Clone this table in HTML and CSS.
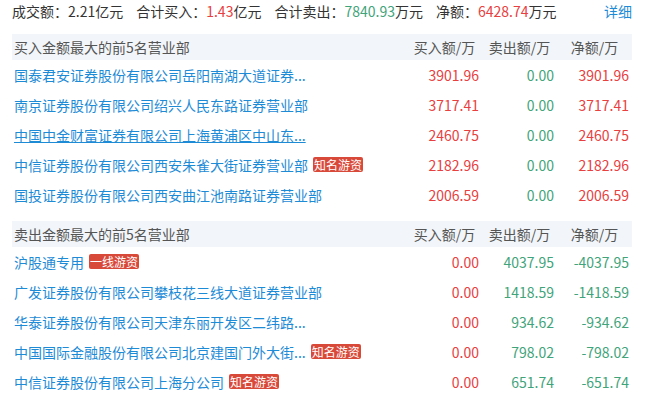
FILE: index.html
```html
<!DOCTYPE html>
<html lang="zh-CN">
<head>
<meta charset="utf-8">
<title>龙虎榜</title>
<link rel="stylesheet" href="styles.css">
</head>
<body>
<div class="page">
  <div class="summary">
    <span class="item">成交额：2.21亿元</span>
    <span class="item">合计买入：<span class="red">1.43</span>亿元</span>
    <span class="item">合计卖出：<span class="green">7840.93</span>万元</span>
    <span class="item">净额：<span class="red">6428.74</span>万元</span>
    <a class="detail">详细</a>
  </div>

  <table class="lhb">
    <thead>
      <tr><th class="name">买入金额最大的前5名营业部</th><th>买入额/万</th><th>卖出额/万</th><th>净额/万</th></tr>
    </thead>
    <tbody>
      <tr><td class="name"><a>国泰君安证券股份有限公司岳阳南湖大道证券...</a></td><td class="red">3901.96</td><td class="green">0.00</td><td class="red">3901.96</td></tr>
      <tr><td class="name"><a>南京证券股份有限公司绍兴人民东路证券营业部</a></td><td class="red">3717.41</td><td class="green">0.00</td><td class="red">3717.41</td></tr>
      <tr><td class="name"><a class="hover">中国中金财富证券有限公司上海黄浦区中山东...</a></td><td class="red">2460.75</td><td class="green">0.00</td><td class="red">2460.75</td></tr>
      <tr><td class="name"><a>中信证券股份有限公司西安朱雀大街证券营业部</a><span class="badge">知名游资</span></td><td class="red">2182.96</td><td class="green">0.00</td><td class="red">2182.96</td></tr>
      <tr><td class="name"><a>国投证券股份有限公司西安曲江池南路证券营业部</a></td><td class="red">2006.59</td><td class="green">0.00</td><td class="red">2006.59</td></tr>
    </tbody>
  </table>

  <table class="lhb second">
    <thead>
      <tr><th class="name">卖出金额最大的前5名营业部</th><th>买入额/万</th><th>卖出额/万</th><th>净额/万</th></tr>
    </thead>
    <tbody>
      <tr><td class="name"><a>沪股通专用</a><span class="badge">一线游资</span></td><td class="red">0.00</td><td class="green">4037.95</td><td class="green">-4037.95</td></tr>
      <tr><td class="name"><a>广发证券股份有限公司攀枝花三线大道证券营业部</a></td><td class="red">0.00</td><td class="green">1418.59</td><td class="green">-1418.59</td></tr>
      <tr><td class="name"><a>华泰证券股份有限公司天津东丽开发区二纬路...</a></td><td class="red">0.00</td><td class="green">934.62</td><td class="green">-934.62</td></tr>
      <tr><td class="name"><a>中国国际金融股份有限公司北京建国门外大街...</a><span class="badge">知名游资</span></td><td class="red">0.00</td><td class="green">798.02</td><td class="green">-798.02</td></tr>
      <tr><td class="name"><a>中信证券股份有限公司上海分公司</a><span class="badge">知名游资</span></td><td class="red">0.00</td><td class="green">651.74</td><td class="green">-651.74</td></tr>
    </tbody>
  </table>
</div>
</body>
</html>
```

FILE: styles.css
```css
html, body {
  margin: 0;
  padding: 0;
  background: #ffffff;
}

body {
  font-family: "Noto Sans CJK SC", "Noto Sans", sans-serif;
  font-size: 14px;
  color: #333333;
}

.page {
  width: 620px;
  padding: 0 13px 0 12px;
}

.summary {
  display: flex;
  align-items: center;
  height: 22px;
  line-height: 22px;
  margin-bottom: 12px;
  white-space: nowrap;
}

.summary .item {
  margin-right: 13px;
}

.detail {
  margin-left: auto;
  color: #1e8bd6;
  cursor: pointer;
}

.red {
  color: #e8403e;
}

.green {
  color: #3fa47a;
}

.lhb {
  width: 620px;
  border-collapse: collapse;
  table-layout: fixed;
}

.lhb.second {
  margin-top: 11px;
}

.lhb th,
.lhb td {
  padding: 0;
  white-space: nowrap;
  font-weight: normal;
}

.lhb th {
  height: 26px;
  line-height: 26px;
  background: #f2f5f9;
  color: #555555;
  text-align: center;
  width: 75px;
}

.lhb th.name {
  width: auto;
  text-align: left;
  padding-left: 2px;
}

.lhb td {
  height: 30px;
  line-height: 30px;
  text-align: right;
  padding-right: 3px;
}

.lhb td.name {
  text-align: left;
  padding-left: 2px;
  padding-right: 0;
}

.lhb td.name a {
  color: #1e8bd6;
  cursor: pointer;
}

.lhb td.name a.hover {
  text-decoration: underline;
}

.badge {
  display: inline-block;
  margin-left: 5px;
  padding: 0 1px;
  height: 15px;
  line-height: 15px;
  font-size: 12px;
  color: #ffffff;
  background: #d9493a;
  border-radius: 2px;
  vertical-align: 1px;
}
```
